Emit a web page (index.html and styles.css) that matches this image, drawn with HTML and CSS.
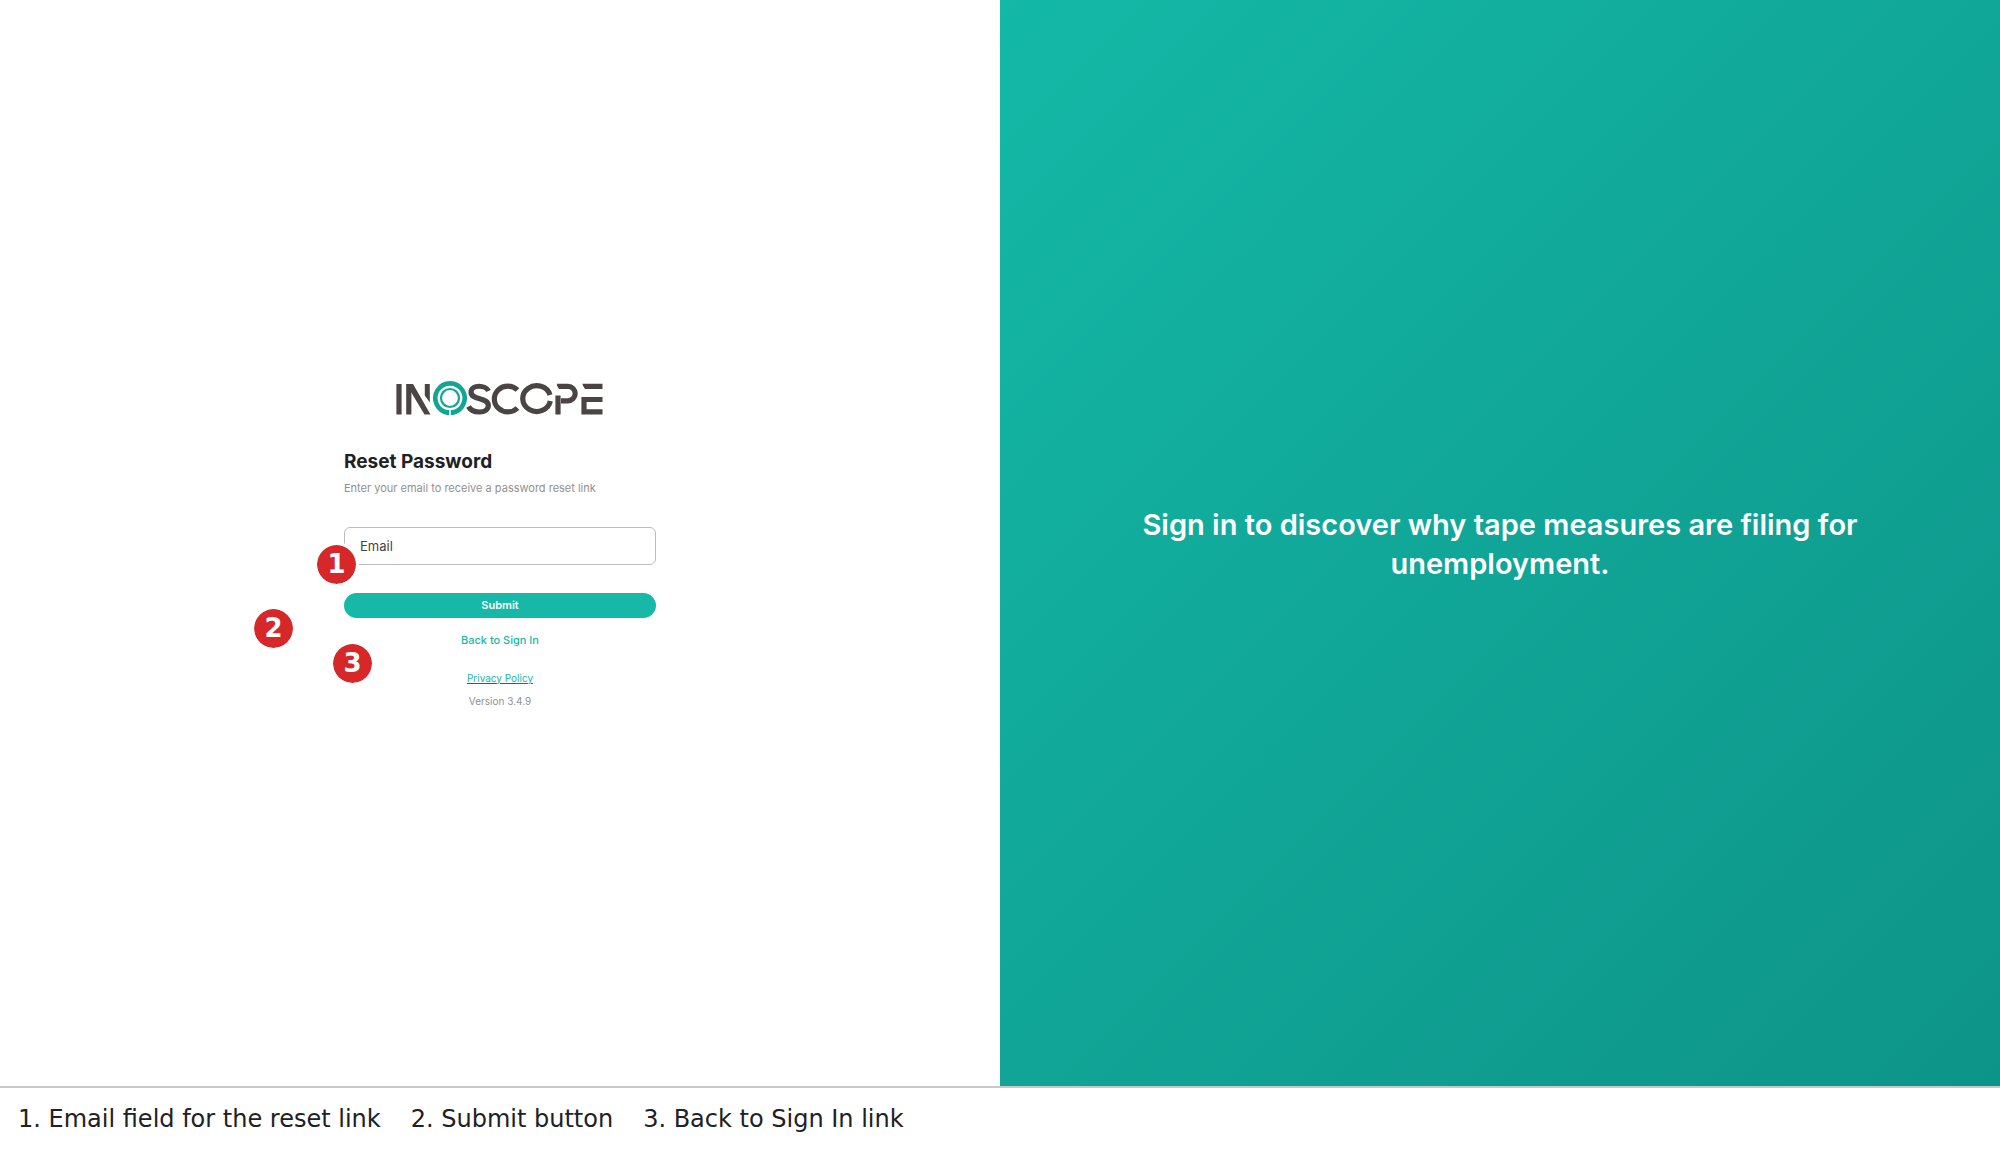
FILE: index.html
```html
<!DOCTYPE html>
<html lang="en">
<head>
<meta charset="utf-8">
<meta name="viewport" content="width=device-width, initial-scale=1">
<title>Inoscope – Reset Password</title>
<link rel="stylesheet" href="styles.css">
</head>
<body>
<main class="screen">
  <section class="panel">
    <form class="reset">
      <svg class="logo" viewBox="0 0 208 36" role="img" aria-label="Inoscope">
        <g fill="none" stroke="#4b4444" stroke-width="5.2">
          <path d="M3 4V34.500M12.800 4V34.500"/>
          <path d="M92.500 11C90 5 75.500 4 75 12C74.800 20.500 92.500 17 92.300 25.500C92 34 76.500 34 72.500 26.500"/>
          <path d="M121.500 10A13.500 12.900 0 1 0 121.500 28"/>
          <path d="M154 15A13.900 12.900 0 1 0 154.300 21"/>
          <path d="M162 34.500V15.500M161 6.400H172A7.200 7.200 0 0 1 172 20.800H165"/>
          <path d="M186.500 6.400H206.500M206.500 19.500H188V31.900H206.500"/>
        </g>
        <path fill="#4b4444" d="M10.200 4H17L34.500 34.500H28.500zM28.800 4h5V22.500l-5-7z"/>
        <g fill="none" stroke="#12a594">
          <path stroke-width="4.600" d="M52 32.600A14.700 14.700 0 1 1 56 32.600"/>
          <circle cx="54" cy="18" r="9" stroke-width="2.200"/>
        </g>
        <path fill="#12a594" d="M50 30h3.200v5H50zM54.800 30H58v5h-3.200z"/>
        <path fill="#fff" d="M157 2V4H160L163 9H159V2zM184 2V4H186L189 9H184z"/>
      </svg>
      <h1 class="title">Reset Password</h1>
      <p class="hint">Enter your email to receive a password reset link</p>
      <div class="field">
        <input class="input" type="email" placeholder="Email" aria-label="Email">
        <span class="badge badge-email">1</span>
      </div>
      <div class="action">
        <button class="submit" type="submit">Submit</button>
        <span class="badge badge-submit">2</span>
      </div>
      <div class="action">
        <a class="back" href="#">Back to Sign In</a>
        <span class="badge badge-back">3</span>
      </div>
      <a class="privacy" href="#">Privacy Policy</a>
      <p class="version">Version 3.4.9</p>
    </form>
  </section>
  <aside class="promo">
    <p class="tagline">Sign in to discover why tape measures are filing for unemployment.</p>
  </aside>
</main>
<footer class="legend">
  <span>1. Email field for the reset link</span>
  <span>2. Submit button</span>
  <span>3. Back to Sign In link</span>
</footer>
</body>
</html>
```
FILE: styles.css
```css
* {
  box-sizing: border-box;
}

body {
  margin: 0;
  min-height: 100vh;
  display: flex;
  flex-direction: column;
  background: #fff;
  color: #202124;
  font-family: Inter, "Liberation Sans", sans-serif;
}

h1,
p {
  margin: 0;
}

.screen {
  flex: 1;
  display: grid;
  grid-template-columns: 1fr 1fr;
}

.panel,
.promo {
  display: flex;
  align-items: center;
  justify-content: center;
}

.reset {
  width: 312px;
  display: flex;
  flex-direction: column;
}

.logo {
  width: 208px;
  height: 36px;
  align-self: center;
}

.title {
  margin-top: 34px;
  font-size: 19px;
  line-height: 24px;
  font-weight: 700;
}

.hint {
  margin-top: 6px;
  font-size: 11px;
  line-height: 16px;
  color: #919191;
}

.field,
.action {
  position: relative;
  display: flex;
  justify-content: center;
}

.field {
  margin: 31px 0 28px;
}

.input {
  width: 100%;
  height: 38px;
  padding: 0 15px;
  border: 1px solid #bdbdbd;
  border-radius: 6px;
  background: #fff;
  font: 13px/20px Inter, "Liberation Sans", sans-serif;
  color: #333;
}

.input::placeholder {
  color: #444;
  opacity: 1;
}

.submit {
  width: 100%;
  height: 25px;
  padding: 0;
  border: 0;
  border-radius: 13px;
  background: #17b8a8;
  color: #fff;
  font: 600 11px/16px Inter, "Liberation Sans", sans-serif;
}

.back {
  margin-top: 14px;
  font-size: 11px;
  line-height: 16px;
  font-weight: 500;
  color: #17b8a8;
  text-decoration: none;
}

.privacy {
  align-self: center;
  margin-top: 24px;
  font-size: 10px;
  line-height: 12px;
  color: #17b8a8;
  text-decoration: underline #555;
}

.version {
  margin-top: 11px;
  font-size: 10px;
  line-height: 12px;
  color: #919191;
  text-align: center;
}

.badge {
  position: absolute;
  width: 45px;
  height: 45px;
  border: 3px solid #fff;
  border-radius: 50%;
  background: #d62828;
  background-clip: padding-box;
  color: #fff;
  font: bold 26px/38px "DejaVu Sans", sans-serif;
  text-align: center;
}

.badge-email {
  left: -30px;
  top: 15px;
}

.badge-submit {
  left: -93px;
  top: 13px;
}

.badge-back {
  left: -14px;
  top: 23px;
}

.promo {
  padding: 0 120px;
  background: linear-gradient(135deg, #14b8a6, #0d9488);
}

.tagline {
  padding-top: 2px;
  color: #fff;
  font-size: 29px;
  line-height: 39px;
  font-weight: 600;
  text-align: center;
}

.legend {
  display: flex;
  flex-wrap: wrap;
  gap: 30px;
  padding: 17px 18px 25px;
  border-top: 2px solid #c8c8c8;
  font-family: "DejaVu Sans", sans-serif;
  font-size: 24px;
  line-height: 29px;
}
```
